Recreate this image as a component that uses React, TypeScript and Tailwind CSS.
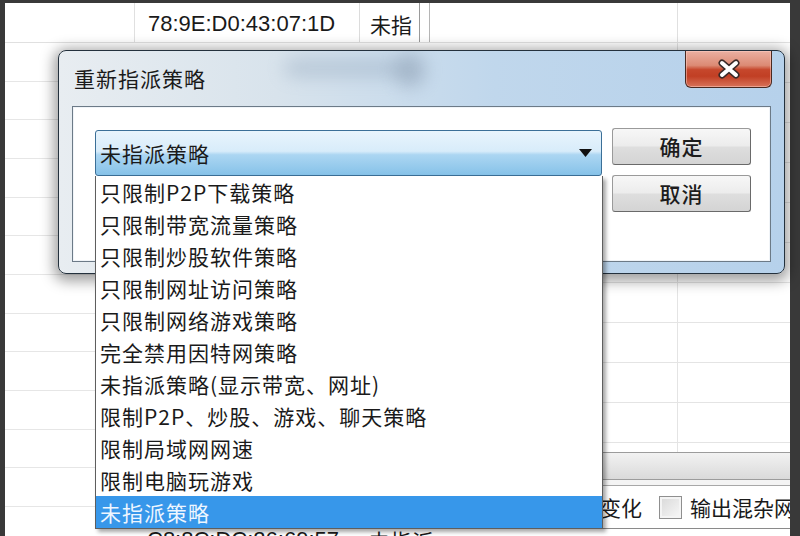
import React from "react";

const items = [
  "只限制P2P下载策略",
  "只限制带宽流量策略",
  "只限制炒股软件策略",
  "只限制网址访问策略",
  "只限制网络游戏策略",
  "完全禁用因特网策略",
  "未指派策略(显示带宽、网址)",
  "限制P2P、炒股、游戏、聊天策略",
  "限制局域网网速",
  "限制电脑玩游戏",
  "未指派策略",
];

function CloseButton() {
  return (
    <div className="absolute left-[626px] top-0 w-[87px] h-[37px] rounded-b-[6px] border border-t-0 border-[#4a2a22] bg-[linear-gradient(to_bottom,#eab0a2_0%,#dc8a74_40%,#c6472c_52%,#c13f24_70%,#d8735a_100%)] shadow-[inset_0_0_0_1px_rgba(255,210,200,0.5)] flex items-center justify-center">
      <svg width="26" height="20" viewBox="0 0 26 20">
        <path d="M6 4 L20 16 M20 4 L6 16" stroke="#3b2a28" strokeWidth="7" strokeLinecap="round" />
        <path d="M6 4 L20 16 M20 4 L6 16" stroke="#ffffff" strokeWidth="4" strokeLinecap="round" />
      </svg>
    </div>
  );
}

function DialogButton({ label }: { label: string }) {
  return (
    <button className="w-[139px] h-[37px] rounded-[3px] border border-[#9a9a9a] border-r-[#6a6a6a] border-b-[#6a6a6a] bg-[linear-gradient(to_bottom,#f7f7f7_0%,#ececec_48%,#dedede_52%,#d4d4d4_100%)] text-[21px] tracking-[1px] leading-none font-medium text-[#1c1c1c] flex items-center justify-center">
      {label}
    </button>
  );
}

export default function App() {
  return (
    <div className="relative w-[800px] h-[536px] overflow-hidden bg-[#393939] pt-[3px] pl-[5px] pr-[10px] font-['Noto_Sans_CJK_SC',sans-serif] text-[#1a1a1a]">
      {/* background list window */}
      <div className="flex h-full bg-white overflow-hidden">
        <div className="w-[130px] shrink-0 flex flex-col">
          <div className="h-[40px] shrink-0 border-b border-r border-[#e0e0e0]" />
          {Array.from({ length: 13 }).map((_, i) => (
            <div key={i} className="h-[38.67px] shrink-0 border-b border-[#e6e6e6]" />
          ))}
        </div>

        <div className="flex-1 min-w-0 flex flex-col overflow-hidden">
          <div className="h-[40px] shrink-0 flex border-b border-[#e2e2e2]">
            <div className="w-[225px] shrink-0 border-r border-[#dcdcdc] pl-[13px] pt-[3px] flex items-center font-['Liberation_Sans',sans-serif] text-[22px] leading-none">
              78:9E:D0:43:07:1D
            </div>
            <div className="w-[60px] shrink-0 border-r border-[#9a9a9a] pl-[10px] pt-[3px] flex items-center overflow-hidden whitespace-nowrap text-[21px] leading-none">
              未指
            </div>
            <div className="w-[10px] shrink-0 border-r border-[#b5b5b5]" />
            <div className="w-[248px] shrink-0 border-r border-[#e0e0e0]" />
            <div className="flex-1" />
          </div>

          {Array.from({ length: 10 }).map((_, i) => (
            <div key={i} className="h-[40px] shrink-0 flex border-b border-[#e4e4e4]">
              <div className="w-[543px] shrink-0 border-r border-[#e4e4e4]" />
            </div>
          ))}
          <div className="h-[9px] shrink-0 flex">
            <div className="w-[543px] shrink-0 border-r border-[#e4e4e4]" />
          </div>

          <div className="h-[28px] shrink-0 border-y border-[#9c9c9c] bg-[linear-gradient(to_bottom,#f2f2f2,#dadada)]" />
          <div className="h-[6px] shrink-0 border-b border-[#a8a8a8] bg-[#f4f4f4]" />

          <div className="h-[42px] shrink-0 flex items-center text-[21px] leading-none whitespace-nowrap">
            <span className="w-[507px] shrink-0 text-right">变化</span>
            <span className="ml-[17px] w-[23px] h-[23px] shrink-0 border border-[#8f8f8f] bg-[linear-gradient(135deg,#d8d8d8,#f8f8f8)] shadow-[inset_0_0_0_2px_#f4f4f4]" />
            <span className="ml-[8px]">输出混杂网</span>
          </div>

          <div className="flex-1 flex border-t border-[#8a8a8a] text-[22px] leading-none whitespace-nowrap">
            <span className="w-[225px] pl-[12px] font-['Liberation_Sans',sans-serif]">C8:8C:DC:26:69:57</span>
            <span className="pl-[8px]">未指派</span>
          </div>
        </div>
      </div>

      {/* dialog */}
      <div className="absolute left-[58px] top-[50px] w-[727px] h-[224px] rounded-[8px] border border-[#24313d] bg-[linear-gradient(to_right,#e8edf1_0%,#d8e3ec_30%,#c0d7ec_60%,#b6d1eb_100%)] shadow-[0_3px_14px_4px_rgba(0,0,0,0.38)] flex flex-col overflow-hidden">
        <div className="absolute left-[225px] top-[8px] w-[120px] h-[18px] rounded-full bg-[#8ea2b8] blur-[9px] opacity-40" />
        <div className="absolute left-[336px] top-[2px] w-[30px] h-[34px] rounded-full bg-[#7a8ca2] blur-[9px] opacity-45" />
        <CloseButton />

        <div className="relative h-[55px] shrink-0 pl-[15px] flex items-center text-[21px] tracking-[1px] leading-none">
          重新指派策略
        </div>

        <div className="relative flex-1 mx-[13px] mb-[11px] bg-white border border-[#6c7a87] shadow-[inset_0_0_0_1px_#f0f4f8] flex items-start gap-[10px] pt-[21px] pl-[22px]">
          <div className="mt-[2px] w-[507px] h-[46px] shrink-0 rounded-[3px] border border-[#3b6f97] bg-[linear-gradient(to_bottom,#e8f4fc_0%,#d8ecfa_46%,#acd6f2_54%,#86c2e8_100%)] flex items-center pl-[4px] pr-[9px]">
            <span className="flex-1 text-[21px] tracking-[1px] leading-none">未指派策略</span>
            <svg width="13" height="8" viewBox="0 0 13 8">
              <path d="M0 0 H13 L6.5 8 Z" fill="#111" />
            </svg>
          </div>
          <div className="flex flex-col gap-[10px]">
            <DialogButton label="确定" />
            <DialogButton label="取消" />
          </div>
        </div>
      </div>

      {/* open dropdown list */}
      <div className="absolute left-[95px] top-[176px] w-[508px] bg-white border-x border-b border-[#5e5e5e] shadow-[3px_3px_4px_rgba(0,0,0,0.35)]">
        {items.map((item, i) => (
          <div
            key={i}
            className={
              i === items.length - 1
                ? "h-[32px] flex items-center pl-[4px] text-[21px] tracking-[1px] leading-none whitespace-nowrap bg-[#3797ea] text-[#eef6ff]"
                : "h-[32px] flex items-center pl-[4px] text-[21px] tracking-[1px] leading-none whitespace-nowrap"
            }
          >
            {item}
          </div>
        ))}
      </div>
    </div>
  );
}
